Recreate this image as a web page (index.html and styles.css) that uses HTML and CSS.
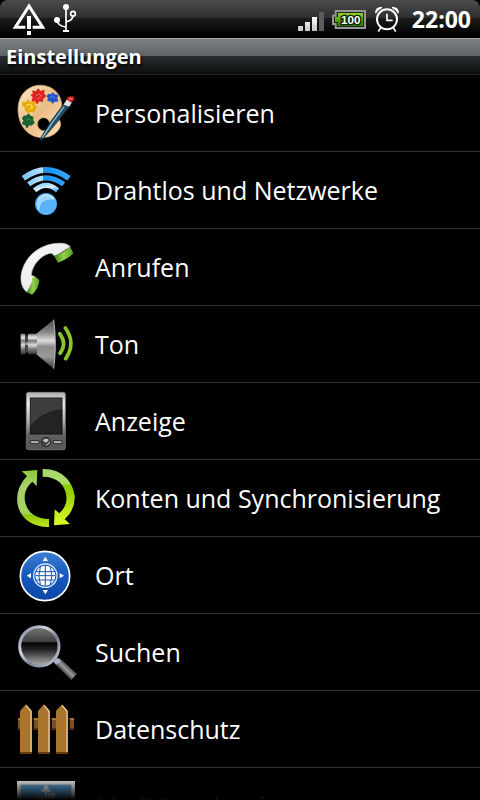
FILE: index.html
```html
<!DOCTYPE html>
<html lang="de">
<head>
<meta charset="utf-8">
<meta name="viewport" content="width=device-width, initial-scale=1">
<title>Einstellungen</title>
<link rel="stylesheet" href="styles.css">
</head>
<body>
<div class="screen">
  <div class="status">
    <svg class="status-left" viewBox="0 0 240 114" aria-hidden="true">
      <path d="M0 0H20Q4 3 0 20Z" fill="#000"/>
      <path d="M76 82H46L87 18L128 82H98" fill="none" stroke="#fff" stroke-width="9"/>
      <path d="M81 48h12v39h-12zM81 93h12v12h-12z" fill="#fff"/>
      <g fill="none" stroke="#fff" stroke-width="5"><path d="M198 22V92M171 60Q173 78 197 81M219 46Q219 61 200 65"/><circle cx="219" cy="41" r="7"/></g>
      <circle cx="198" cy="21" r="9" fill="#fff"/><circle cx="171" cy="60" r="9" fill="#fff"/><path d="M189 90h18v6h-18z" fill="#fff"/>
    </svg>
    <div class="status-right">
      <svg class="status-icons" viewBox="0 0 330 114" aria-hidden="true">
        <defs>
          <linearGradient id="sig" x1="0" y1="0" x2="0" y2="1"><stop offset="0" stop-color="#fff"/><stop offset="1" stop-color="#c4c4c4"/></linearGradient>
          <linearGradient id="bat" x1="0" y1="0" x2="0" y2="1"><stop offset="0" stop-color="#92d030"/><stop offset=".5" stop-color="#58a50a"/><stop offset="1" stop-color="#347c00"/></linearGradient>
        </defs>
        <path d="M24 78h15v15H24zM45 66h15v27H45zM66 51h15v42H66z" fill="url(#sig)"/><path d="M87 36h15v57H87z" fill="#5c5c5c"/>
        <path d="M137 33H225V84H137V72H129V47H137Z" fill="#1c2a10" stroke="#969696" stroke-width="6"/>
        <path d="M144 39H219V78H144V66H135V51H144Z" fill="url(#bat)"/>
        <text class="battery-text" x="182" y="71" text-anchor="middle">100</text>
        <g fill="none" stroke="#fff" stroke-width="5"><circle cx="291" cy="58" r="30" stroke-width="6"/><path d="M291 41V61H308M272 83L265 95M310 83L317 95"/></g>
        <path d="M255 38Q256 20 276 20Q278 24 273 26Q263 30 260 38Q258 42 255 38ZM327 38Q326 20 306 20Q304 24 309 26Q319 30 322 38Q324 42 327 38Z" fill="#fff"/>
      </svg>
      <time class="clock">22:00</time>
    </div>
    <svg class="corner" viewBox="0 0 7 7" aria-hidden="true"><path d="M0 0H7V7Q6 1 0 0Z"/></svg>
  </div>
  <header class="title"><h1>Einstellungen</h1></header>
  <nav class="list" aria-label="Einstellungen">
    <a class="row" href="#personalisieren">
      <svg class="icon" viewBox="0 -3 240 228" aria-hidden="true">
        <defs><linearGradient id="wood" x1="0" y1="0" x2="1" y2="1"><stop offset="0" stop-color="#ffe9c8"/><stop offset=".5" stop-color="#e9bd86"/><stop offset="1" stop-color="#ffe2b8"/></linearGradient></defs>
        <path fill-rule="evenodd" d="M112 28C146 24 180 43 185 82C187 99 176 106 173 116C172 128 184 134 182 148C177 169 153 187 122 185C81 181 54 147 54 99C54 62 77 34 112 28ZM131 125A18 19 0 1 0 131 164A18 19 0 1 0 131 125Z" fill="url(#wood)" stroke="#c99d69" stroke-width="2"/>
        <path d="M99 46L109 49L114 40L121 48L131 44L130 55L136 60L128 67L126 76L117 73L111 81L106 73L97 74L101 63L95 57L102 54Z" fill="#db2422" stroke="#db2422" stroke-width="5" stroke-linejoin="round"/>
        <path d="M108 60L118 54L126 61M112 70L121 63" fill="none" stroke="#ff7164" stroke-width="3"/>
        <path d="M145 55L153 56L158 50L164 56L174 58L170 66L174 75L164 76L158 82L153 75L143 74L146 66L141 62Z" fill="#2353c4" stroke="#2353c4" stroke-width="3" stroke-linejoin="round"/><path d="M150 66L158 60L165 67" fill="none" stroke="#5c8ff0" stroke-width="3"/>
        <path d="M69 79L79 80L84 72L90 81L105 77L102 88L108 94L102 107L91 105L84 110L77 103L76 93L68 89Z" fill="#e3ad0c" stroke="#e3ad0c" stroke-width="4" stroke-linejoin="round"/><path d="M78 88L91 85L98 92L90 99" fill="none" stroke="#ffdc50" stroke-width="4"/>
        <path d="M72 121L80 120L86 115L91 121L99 124L97 132L102 140L94 147L87 145L81 154L77 146L68 143L73 134L68 128Z" fill="#176334" stroke="#176334" stroke-width="4" stroke-linejoin="round"/><path d="M78 133L87 127L92 135" fill="none" stroke="#48925b" stroke-width="3"/>
        <path d="M190 86L208 92Q165 148 124 194L121 188Q148 137 190 86Z" fill="#244d66" stroke="#0b2536" stroke-width="2"/>
        <path d="M192 92Q157 138 127 185" stroke="#8fb9cd" stroke-width="4" fill="none"/>
        <path d="M190 86L201 70L216 79L208 92Z" fill="#d9dfe2"/><path d="M199 69Q204 58 222 62Q228 66 214 80Z" fill="#c51d17"/><path d="M207 67L218 69" stroke="#ff6c57" stroke-width="5"/>
      </svg><span class="label">Personalisieren</span>
    </a>
    <a class="row" href="#netzwerke">
      <svg class="icon" viewBox="0 -3 240 228" aria-hidden="true">
        <defs><linearGradient id="wf" x1="66" x2="211" y1="0" y2="0" gradientUnits="userSpaceOnUse"><stop offset="0" stop-color="#77c1fc"/><stop offset=".43" stop-color="#b8e2ff"/><stop offset=".44" stop-color="#1694f6"/><stop offset="1" stop-color="#38a4fc"/></linearGradient>
        <linearGradient id="wf2" x1="0" x2="1" y1="0" y2="1"><stop offset="0" stop-color="#8ed0ff"/><stop offset=".5" stop-color="#d9f1ff"/><stop offset="1" stop-color="#55b2ff"/></linearGradient></defs>
        <path d="M70 76Q138 25 207 76" fill="none" stroke="url(#wf)" stroke-width="17"/>
        <path d="M86 94Q138 55 191 94" fill="none" stroke="url(#wf)" stroke-width="15"/>
        <path d="M104 112Q138 82 173 112" fill="none" stroke="url(#wf2)" stroke-width="15"/>
        <circle cx="138" cy="153" r="31" fill="#9cd7ff" stroke="#41a5fa" stroke-width="4"/><path d="M119 175C116 143 142 136 167 141C174 171 145 190 119 175Z" fill="#5ab2fa"/><path d="M115 139Q138 113 162 137" fill="none" stroke="#c9eaff" stroke-width="4"/>
      </svg><span class="label">Drahtlos und Netzwerke</span>
    </a>
    <a class="row" href="#anrufen">
      <svg class="icon" viewBox="0 -3 240 228" aria-hidden="true">
        <defs><linearGradient id="grip" x1="0" y1="0" x2="1" y2="0"><stop offset="0" stop-color="#378209"/><stop offset=".5" stop-color="#94d24f"/><stop offset="1" stop-color="#53a21c"/></linearGradient><linearGradient id="tube" x1="0" y1="0" x2="1" y2="1"><stop offset="0" stop-color="#fff"/><stop offset="1" stop-color="#dadada"/></linearGradient></defs>
        <path d="M81 187C57 167 57 128 79 93C103 54 150 36 189 40Q202 41 211 50L164 79L156 70C130 69 95 103 94 136L105 140Z" fill="url(#tube)" stroke="#c5c5c5" stroke-width="2"/>
        <path d="M162 77Q190 70 210 50L220 70Q202 88 174 98Z" fill="url(#grip)"/><path d="M104 139L118 150Q117 175 96 194L80 186Q96 169 97 144Z" fill="url(#grip)"/>
      </svg><span class="label">Anrufen</span>
    </a>
    <a class="row" href="#ton">
      <svg class="icon" viewBox="0 -3 240 228" aria-hidden="true">
        <defs><linearGradient id="metal" x1="0" y1="0" x2="0" y2="1"><stop offset="0" stop-color="#4d4d4d"/><stop offset=".25" stop-color="#858585"/><stop offset=".43" stop-color="#dedede"/><stop offset=".55" stop-color="#8c8c8c"/><stop offset=".75" stop-color="#999"/><stop offset="1" stop-color="#333"/></linearGradient><linearGradient id="core" x1="0" y1="0" x2="0" y2="1"><stop offset="0" stop-color="#777"/><stop offset=".2" stop-color="#eee"/><stop offset=".35" stop-color="#777"/><stop offset=".55" stop-color="#ddd"/><stop offset=".75" stop-color="#777"/><stop offset="1" stop-color="#333"/></linearGradient></defs>
        <path d="M109 80L161 38Q171 112 161 185L109 142Z" fill="url(#metal)"/><path d="M161 38Q171 112 161 185" fill="none" stroke="#bbb" stroke-width="3"/><path d="M62 80H76V142H62ZM84 80H111V142H84Z" fill="url(#core)"/><path d="M76 85H84V137H76Z" fill="#484848"/><path d="M76 106H84V114H76Z" fill="#aaa"/>
        <path d="M179 80Q202 110 180 139M196 63Q229 108 197 155" fill="none" stroke="#8ac52c" stroke-width="11" stroke-linecap="round"/>
      </svg><span class="label">Ton</span>
    </a>
    <a class="row" href="#anzeige">
      <svg class="icon" viewBox="0 -3 240 228" aria-hidden="true">
        <defs><linearGradient id="phone" x1="0" y1="0" x2="0" y2="1"><stop offset="0" stop-color="#aaa"/><stop offset=".18" stop-color="#f0f0f0"/><stop offset=".5" stop-color="#b0b0b0"/><stop offset=".76" stop-color="#606060"/><stop offset="1" stop-color="#555"/></linearGradient></defs>
        <rect x="79" y="25" width="117" height="172" rx="6" fill="url(#phone)" stroke="#8a8a8a" stroke-width="2"/><rect x="91" y="42" width="95" height="108" fill="#232323" stroke="#111" stroke-width="3"/><path d="M92 43H185V75Q119 85 92 127Z" fill="#3d3d3d"/>
        <path d="M91 170H117V179H91ZM160 170H186V179H160Z" fill="#b5b5b5" stroke="#292929" stroke-width="3"/><circle cx="138" cy="174" r="14" fill="#454545" stroke="#222" stroke-width="3"/><path d="M128 169Q136 160 147 167L138 176Z" fill="#c5c5c5"/><path d="M139 184Q148 181 149 173" fill="none" stroke="#ccc" stroke-width="3"/>
      </svg><span class="label">Anzeige</span>
    </a>
    <a class="row" href="#konten">
      <svg class="icon" viewBox="0 -3 240 228" aria-hidden="true">
        <defs><linearGradient id="sl" x1="0" y1="0" x2="0" y2="1"><stop offset="0" stop-color="#8dc63c"/><stop offset=".3" stop-color="#a9d26c"/><stop offset=".76" stop-color="#a4d25d"/><stop offset=".8" stop-color="#8bc800"/><stop offset="1" stop-color="#c6e72c"/></linearGradient><linearGradient id="sr" x1="0" y1="0" x2="0" y2="1"><stop offset="0" stop-color="#a5d56b"/><stop offset=".25" stop-color="#b0dd68"/><stop offset=".3" stop-color="#87c900"/><stop offset="1" stop-color="#dffc25"/></linearGradient></defs>
        <path d="M65 31L112 27L110 75L97 62C68 86 67 126 91 154Q109 173 147 174V198C94 199 57 168 52 125Q47 81 81 45Z" fill="url(#sl)"/>
        <path d="M128 24C182 22 219 59 224 105Q226 146 194 175L210 189L162 193L164 145L178 157C207 131 206 91 179 64Q160 47 128 47Z" fill="url(#sr)"/>
      </svg><span class="label">Konten und Synchronisierung</span>
    </a>
    <a class="row" href="#ort">
      <svg class="icon" viewBox="0 -3 240 228" aria-hidden="true">
        <defs><linearGradient id="blue" x1="0" y1="0" x2="0" y2="1"><stop offset="0" stop-color="#3c80d4"/><stop offset=".5" stop-color="#1659bd"/><stop offset="1" stop-color="#0b46a5"/></linearGradient></defs>
        <circle cx="135" cy="114" r="74" fill="url(#blue)" stroke="#fff" stroke-width="5"/><circle cx="136" cy="113" r="35" fill="#1655b0" stroke="#d9eaff" stroke-width="4"/><circle cx="136" cy="113" r="30" fill="#fff"/>
        <path d="M106 101H166M106 113H166M108 126H164M136 83V143M121 87Q112 113 121 139M151 87Q160 113 151 139" fill="none" stroke="#1756b0" stroke-width="3"/>
        <path d="M136 56L144 69H128ZM136 169L144 156H128ZM80 113L93 105V121ZM192 113L179 105V121Z" fill="#fff"/>
      </svg><span class="label">Ort</span>
    </a>
    <a class="row" href="#suchen">
      <svg class="icon" viewBox="0 -3 240 228" aria-hidden="true">
        <defs><linearGradient id="lens" x1="0" y1="0" x2="0" y2="1"><stop offset="0" stop-color="#777"/><stop offset=".38" stop-color="#404040"/><stop offset=".41" stop-color="#050505"/><stop offset=".58" stop-color="#222"/><stop offset="1" stop-color="#b5b5b5"/></linearGradient><linearGradient id="rim" x1="0" y1="0" x2="1" y2="1"><stop offset="0" stop-color="#717b91"/><stop offset=".35" stop-color="#d5d9e4"/><stop offset=".6" stop-color="#777c90"/><stop offset="1" stop-color="#d1d7e5"/></linearGradient><linearGradient id="handle" x1="0" y1="1" x2="1" y2="0"><stop offset=".3" stop-color="#161616"/><stop offset=".5" stop-color="#999"/><stop offset=".7" stop-color="#303030"/></linearGradient></defs>
        <path d="M164 145L179 130L230 177L214 194Z" fill="url(#handle)" stroke="#484848" stroke-width="2"/><path d="M160 140L173 128L183 138L169 149Z" fill="#aeb4c4"/>
        <circle cx="118" cy="94" r="59" fill="url(#lens)" stroke="url(#rim)" stroke-width="9"/>
      </svg><span class="label">Suchen</span>
    </a>
    <a class="row" href="#datenschutz">
      <svg class="icon" viewBox="0 -3 240 228" aria-hidden="true">
        <path d="M54 79H222V113H54Z" fill="#79502b"/><path d="M54 79H222V84H54Z" fill="#b27b32"/><path d="M54 108H222V113H54Z" fill="#4e2f12"/>
        <path d="M96 79H102V113H96ZM150 79H156V113H150ZM204 79H210V113H204Z" fill="#17100a"/>
        <g fill="#a9752d"><path d="M60 186V57L78 37L96 57V186ZM114 186V57L132 37L150 57V186ZM168 186V57L186 37L204 57V186Z"/></g>
        <path d="M78 40L93 58V180M132 40L147 58V180M186 40L201 58V180" fill="none" stroke="#e6c79b" stroke-width="4"/>
        <path d="M60 180H96V186H60ZM114 180H150V186H114ZM168 180H204V186H168Z" fill="#653b0b"/>
      </svg><span class="label">Datenschutz</span>
    </a>
    <a class="row" href="#pc">
      <svg class="icon" viewBox="0 -3 240 228" aria-hidden="true">
        <rect x="51" y="36" width="174" height="140" fill="#f4f4f4"/><rect x="63" y="48" width="150" height="116" fill="#5ba5df" stroke="#98a9b5" stroke-width="3"/>
        <path d="M138 46L154 69H142V140H134V69H122Z" fill="#d6e6f2"/><path d="M144 72H165V93H144Z" fill="#d6e6f2"/><circle cx="121" cy="90" r="10" fill="#d6e6f2"/>
      </svg><span class="label">Mit PC verbinden</span>
    </a>
  </nav>
  <div class="fade"></div>
</div>
</body>
</html>
```
FILE: styles.css
```css
* { box-sizing: border-box; }
body {
  margin: 0;
  background: #000;
  color: #fff;
  font-family: "Open Sans", "Noto Sans", sans-serif;
}
.screen {
  position: relative;
  display: flex;
  flex-direction: column;
  height: 100vh;
  overflow: hidden;
}
.status {
  position: relative;
  flex: none;
  display: flex;
  justify-content: space-between;
  height: 38px;
  background: linear-gradient(#4b4b4b 0, #2e2e2e 18px, #1b1b1b 18px, #000 36px);
}
.status-left { width: 80px; height: 38px; }
.status-right { display: flex; align-items: center; padding-right: 9px; }
.status-icons { width: 110px; height: 38px; margin-right: 12px; }
.battery-text {
  font: bold 35px "Liberation Sans", sans-serif;
  fill: #fff;
  stroke: #102000;
  stroke-width: 8px;
  paint-order: stroke;
}
.clock { font: bold 23px/38px "Open Sans", sans-serif; }
.corner { position: absolute; top: 0; right: 0; width: 7px; height: 7px; }
.title {
  flex: none;
  height: 37px;
  padding-left: 6px;
  border-top: 1px solid #a9abab;
  border-bottom: 1px solid #242626;
  background: linear-gradient(#7c8082 0, #606365 17px, #2b2e30 17px, #0c0e0e 35px);
}
h1 {
  margin: 0;
  font: bold 20px/35px "Open Sans", sans-serif;
  text-shadow: 1px 2px 3px #000;
}
.list { flex: none; }
.row {
  display: flex;
  align-items: center;
  gap: 15px;
  height: 77px;
  border-bottom: 1px solid #333;
  color: #fff;
  text-decoration: none;
}
.icon { flex: none; width: 80px; height: 76px; }
.label { font-size: 25px; line-height: 34px; white-space: nowrap; }
.fade {
  position: absolute;
  right: 0;
  bottom: 0;
  left: 0;
  height: 24px;
  background: linear-gradient(transparent, #000);
  pointer-events: none;
}
```
